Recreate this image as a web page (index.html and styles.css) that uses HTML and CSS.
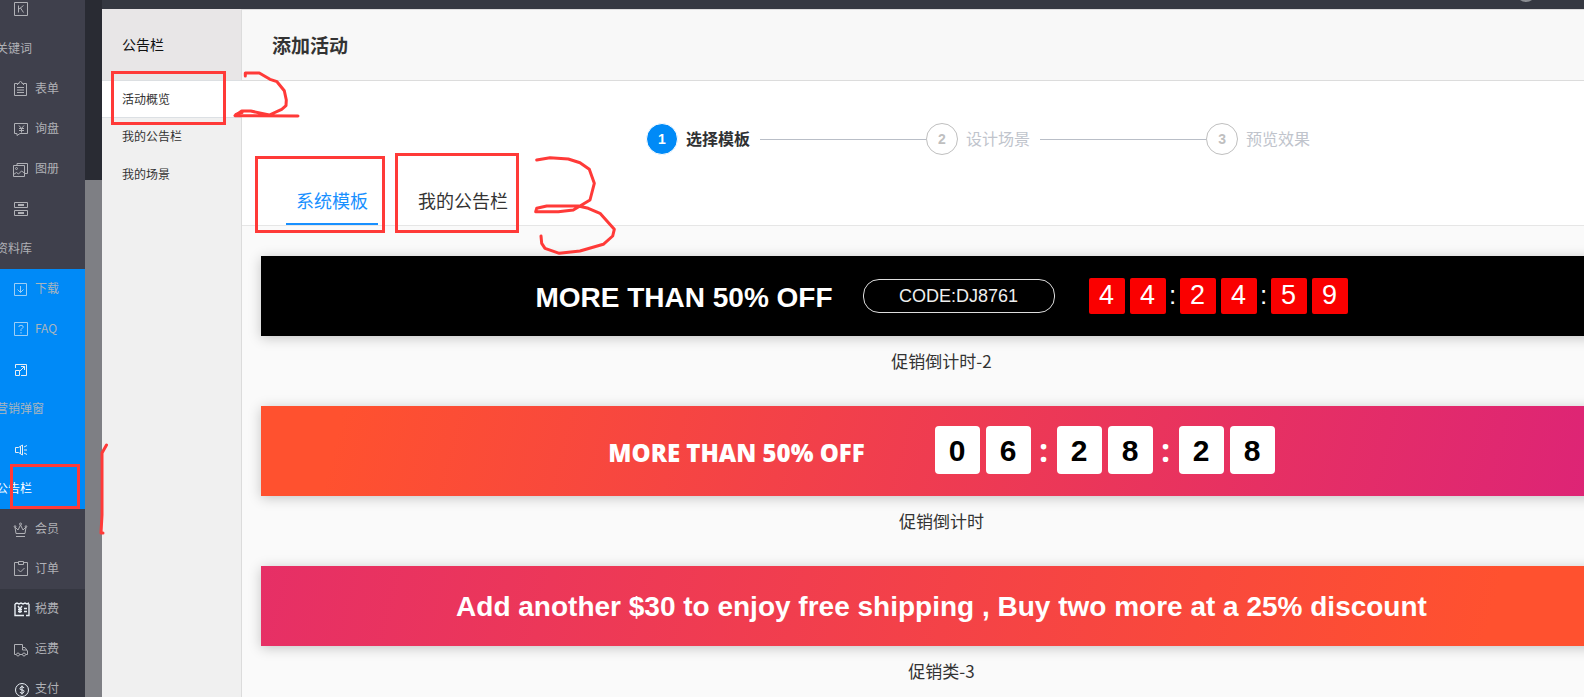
FILE: index.html
```html
<!DOCTYPE html>
<html lang="zh-CN">
<head>
<meta charset="utf-8">
<title>添加活动</title>
<link rel="stylesheet" href="styles.css">
</head>
<body>
<nav class="rail" aria-label="主导航">
  <div class="rail-group">
    <a class="rail-link wrap" href="#"><span class="rail-icon"><svg viewBox="0 0 16 16"><path d="M1.5 1.5h13v13h-13zM5.5 4.500v7M10.500 4.500l-4.500 3.500M7.500 7l3 4.500"/></svg></span><span class="rail-text">关键词</span></a>
    <a class="rail-link" href="#"><span class="rail-icon"><svg viewBox="0 0 16 16"><path d="M4 2.500H1.500v12h12v-12H11M4.500 4V2.500h1.500a1.500 2 0 0 1 3 0h1.500V4M4 6.500h7M4 9h7M4 11.500h7"/></svg></span><span class="rail-text">表单</span></a>
    <a class="rail-link" href="#"><span class="rail-icon"><svg viewBox="0 0 16 16"><path d="M1.500 2.500h13v10H7l-3 2v-2H1.500zM6 4.500l2.500 3 2.500-3M8.500 7.500v4M6 7.500h5M6 9.500h5"/></svg></span><span class="rail-text">询盘</span></a>
    <a class="rail-link" href="#"><span class="rail-icon"><svg viewBox="0 0 16 16"><path d="M.5 4.500h11v11H.5zM4 4V2.500h10.500v10H12M.5 13.500l3-2 2 1.500 3-3 3 2"/><circle cx="3.500" cy="7.500" r="1"/></svg></span><span class="rail-text">图册</span></a>
    <a class="rail-link wrap" href="#"><span class="rail-icon"><svg viewBox="0 0 16 16"><path d="M1.500 1.500h13v5h-13zM1.500 9.500h13v5h-13z"/><path class="thick" d="M5 4h6M5 12h6"/></svg></span><span class="rail-text">资料库</span></a>
  </div>
  <div class="rail-group active">
    <a class="rail-link" href="#"><span class="rail-icon"><svg viewBox="0 0 16 16"><path d="M1.500 2.500h12v12h-12zM7.500 5v6.500M4.500 8.500l3 3 3-3"/></svg></span><span class="rail-text">下载</span></a>
    <a class="rail-link" href="#"><span class="rail-icon"><svg viewBox="0 0 16 16"><path d="M1.500 1.500h13v13h-13zM6 6V5q2-1.500 4 0v1.500L8 8.500V10M8 11v1.500"/></svg></span><span class="rail-text">FAQ</span></a>
    <a class="rail-link wrap" href="#"><span class="rail-icon bright"><svg viewBox="0 0 16 16"><path d="M2.500 7V3.500h11v11H8M2.500 9.500h4v5h-4zM7 10l4.500-4.500M8 5.500h3.500V9"/></svg></span><span class="rail-text">营销弹窗</span></a>
    <a class="rail-link wrap current" href="#"><span class="rail-icon bright"><svg viewBox="0 0 16 16"><path d="M2.500 6.500h3l4-2.500v10l-4-2.500h-3zM7.500 5v8M11 6l3-1.500M11 9h3M11 12l3 1.500"/></svg></span><span class="rail-text">公告栏</span></a>
  </div>
  <div class="rail-group">
    <a class="rail-link" href="#"><span class="rail-icon"><svg viewBox="0 0 16 16"><path d="M3 12.500 2 6l3 3 2.500-5L10 9l3-3-1 6.500zM3 15.500h9"/><circle cx="7.500" cy="3" r="1"/><circle cx="2" cy="5.500" r=".8"/><circle cx="13" cy="5.500" r=".8"/></svg></span><span class="rail-text">会员</span></a>
    <a class="rail-link" href="#"><span class="rail-icon"><svg viewBox="0 0 16 16"><path d="M5 1.500H1.500v13h13V1.500H11M5.500.5h5v3h-5zM5 8.500l2.500 2.500 4-4"/></svg></span><span class="rail-text">订单</span></a>
  </div>
  <div class="rail-group deep">
    <a class="rail-link" href="#"><span class="rail-icon bright"><svg viewBox="0 0 18 16"><path class="bold" d="M2 3v11.500h9M13 14.500h3V3M2 3l2-1 2 1 2-1 2 1 2-1 2 1 2-1M5 5l2 3 2-3M7 8v4M5 8.500h4M5 10.500h4M11 7.500h3M11 10.500h3"/></svg></span><span class="rail-text">税费</span></a>
    <a class="rail-link" href="#"><span class="rail-icon"><svg viewBox="0 0 16 16"><path d="M3 13.500H1.500v-10h8v3h2.500l2.500 3.500v3.500H13M9.500 6.500v2.500h4.500M6.500 13.500h3"/><circle cx="5" cy="13.500" r="1.500"/><circle cx="11" cy="13.500" r="1.500"/></svg></span><span class="rail-text">运费</span></a>
    <a class="rail-link" href="#"><span class="rail-icon bright"><svg viewBox="0 0 16 16"><circle cx="9" cy="9" r="6.500"/><path d="M11 7q-.5-1.300-2-1.300T7 7.300 9 9t2 1.700-2 1.600-2-1.300M9 4.500v9"/></svg></span><span class="rail-text">支付</span></a>
  </div>
</nav>
<div class="rail-track"><div class="rail-thumb"></div></div>
<div class="app">
  <header class="topbar"><span class="avatar"></span></header>
  <div class="body">
    <aside class="side">
      <h2 class="side-title">公告栏</h2>
      <a class="side-link selected" href="#">活动概览</a>
      <a class="side-link" href="#">我的公告栏</a>
      <a class="side-link" href="#">我的场景</a>
    </aside>
    <main class="main">
      <h1 class="page-title">添加活动</h1>
      <section class="setup">
        <ol class="steps">
          <li class="step on"><span class="num">1</span><span class="step-name">选择模板</span></li>
          <li class="step"><span class="num">2</span><span class="step-name">设计场景</span></li>
          <li class="step"><span class="num">3</span><span class="step-name">预览效果</span></li>
        </ol>
        <div class="tabs" role="tablist">
          <button class="tab active" role="tab" aria-selected="true">系统模板</button>
          <button class="tab" role="tab" aria-selected="false">我的公告栏</button>
        </div>
      </section>
      <section class="templates">
        <figure class="card">
          <div class="banner black">
            <strong class="headline">MORE THAN 50% OFF</strong>
            <span class="code">CODE:DJ8761</span>
            <div class="timer red"><span class="pair"><b>4</b><b>4</b></span><i>:</i><span class="pair"><b>2</b><b>4</b></span><i>:</i><span class="pair"><b>5</b><b>9</b></span></div>
          </div>
          <figcaption>促销倒计时-2</figcaption>
        </figure>
        <figure class="card">
          <div class="banner sunset">
            <strong class="headline heavy">MORE THAN 50% OFF</strong>
            <div class="timer white"><span class="pair"><b>0</b><b>6</b></span><i>:</i><span class="pair"><b>2</b><b>8</b></span><i>:</i><span class="pair"><b>2</b><b>8</b></span></div>
          </div>
          <figcaption>促销倒计时</figcaption>
        </figure>
        <figure class="card">
          <div class="banner rose">
            <strong class="headline">Add another $30 to enjoy free shipping , Buy two more at a 25% discount</strong>
          </div>
          <figcaption>促销类-3</figcaption>
        </figure>
      </section>
    </main>
  </div>
</div>
<svg class="marks" width="1584" height="697" viewBox="0 0 1584 697" aria-hidden="true">
  <path class="box" d="M112.500 72.500h112v51h-112zM256.500 157.500h127v74h-127zM396.500 154.500h121v77h-121zM11.500 465.500h67v42h-67z"/>
  <path d="M245.300 76v-3h14L270 79.300l7 2.400 7.300 9 2 9.300-.3 5.700-4.300 3.600-12.400 5.700-18.600-4h-9L235 115.700l63 .3"/>
  <path d="M236 114.500l6-2M536.700 160 550 157.700l18.300 1.300 11.700 3.700 9.300 6.600 5 14L590 200l-16.700 10-15 1.700h-22.600l1-3.400 10-2.300h31.600l10 2.300 11.700 5 14.300 16-1.600 6.700-9.400 8.300L580 251l-20.700 2.300-14.300-5-3.300-5-.7-7.300"/>
  <path d="M106.500 445 102 453v62l-1 18h2"/>
</svg>
</body>
</html>
```
FILE: styles.css
```css
* { box-sizing: border-box; }

body {
  margin: 0;
  display: flex;
  height: 100vh;
  overflow: hidden;
  font-family: "Noto Sans CJK SC", sans-serif;
  color: #333;
  background: #fafafa;
}

a { color: inherit; text-decoration: none; }

/* Icon rail */
.rail {
  flex: none;
  width: 85px;
  margin-top: -11px;
  overflow: hidden;
  font-size: 12px;
  line-height: 40px;
  color: #b0b1b6;
  background: #3f404c;
}
.rail-group.active { background: #008af7; color: #a9b5be; }
.rail-group.active .rail-icon { color: #9dcef5; }
.rail-group .rail-icon.bright,
.rail-group.active .rail-icon.bright { color: #e8eef4; }
.rail-group.deep { background: #353741; }
.rail-link { display: flex; height: 40px; padding-left: 13px; gap: 6px; }
.rail-icon { flex: none; display: flex; align-items: center; width: 16px; height: 40px; }
.rail-icon svg { flex: none; height: 16px; fill: none; stroke: currentColor; stroke-width: 1; }
.rail-icon .thick { stroke-width: 2; }
.rail-icon .bold { stroke-width: 1.4; }
.rail-text { height: 40px; line-height: 38px; white-space: nowrap; }
.rail-link.wrap { flex-direction: column; gap: 0; height: 80px; }
.rail-link.wrap .rail-text { margin-left: -17px; }
.rail-link.current { color: #fff; }

.rail-track { flex: none; width: 17px; padding-top: 180px; background: #292b33; }
.rail-thumb { height: 100%; background: #7e7f84; }

/* Application frame */
.app { flex: 1; min-width: 0; display: flex; flex-direction: column; }
.topbar {
  flex: none;
  display: flex;
  justify-content: flex-end;
  height: 9px;
  padding-right: 48px;
  overflow: hidden;
  background: #353841;
}
.avatar { width: 20px; height: 20px; margin-top: -18px; border-radius: 50%; background: #8b8e92; }
.body { flex: 1; display: flex; min-height: 0; }

.side { flex: none; width: 140px; border-right: 1px solid #dcdcdc; background: #f0f0f0; }
.side-title {
  margin: 0;
  height: 72px;
  padding-left: 20px;
  border-bottom: 1px solid #dcdfe2;
  background: #e8e6e7;
  color: #111;
  font-size: 14px;
  font-weight: 400;
  line-height: 70px;
}
.side-link { display: block; height: 38px; padding-left: 20px; font-size: 12px; line-height: 36px; }
.side-link.selected { height: 37px; border-bottom: 1px solid #dce0e4; margin-right: -1px; background: #fff; }

.main { flex: 1; min-width: 0; overflow: hidden; }
.page-title {
  margin: 0;
  height: 72px;
  padding-left: 30px;
  border: solid #dcdcdc;
  border-width: 1px 0;
  background: #f8f8f8;
  font-size: 19px;
  font-weight: 700;
  line-height: 70px;
}

.setup { border-bottom: 1px solid #e6e6e6; background: #fff; }

/* Step indicator */
.steps { display: flex; margin: 0; padding: 42px 0 0 404px; list-style: none; }
.step { display: flex; align-items: center; height: 32px; gap: 8px; font-size: 16px; color: #c0c4cc; }
.step:not(:last-child)::after { content: ""; width: 166px; height: 1px; margin-left: 2px; background: #b9bec7; }
.num {
  width: 32px;
  height: 32px;
  border: 1px solid #bfbfbf;
  border-radius: 50%;
  color: #bfbfbf;
  font: 700 14px/30px "Liberation Sans", sans-serif;
  text-align: center;
}
.step-name { height: 32px; line-height: 30px; white-space: nowrap; }
.step.on { color: #303133; font-weight: 700; }
.step.on .num { border-color: #fff; background: #008af7; color: #fff; }

/* Tabs */
.tabs { display: flex; gap: 30px; padding: 20px 0 0 44px; }
.tab {
  height: 50px;
  padding: 2px 10px 0;
  border: 0;
  border-bottom: 2px solid transparent;
  background: none;
  color: #333;
  font: 400 18px/24px "Noto Sans CJK SC", sans-serif;
}
.tab.active { border-color: #1890ff; color: #1890ff; }

/* Template previews; the list runs past the window's right edge */
.templates { display: flex; flex-direction: column; gap: 20px; padding-top: 30px; margin: 0 -38px 0 19px; }
.card { margin: 0; }
.card figcaption { height: 50px; font-size: 17px; line-height: 50px; text-align: center; }
.banner {
  display: flex;
  align-items: center;
  justify-content: center;
  height: 80px;
  box-shadow: 0 2px 12px rgba(0, 0, 0, .22);
  color: #fff;
  font-family: "Liberation Sans", Arial, sans-serif;
}
.black { background: #000; }
.sunset { height: 90px; gap: 70px; background: linear-gradient(105deg, #ff512f 6%, #dd2476 98%); }
.rose { background: linear-gradient(105deg, #e62f66, #ff512f 90%); }
.headline { padding-top: 2px; font-size: 28px; line-height: 36px; white-space: nowrap; }
.headline.heavy { padding-top: 4px; font: 800 24px/36px "Open Sans", sans-serif; }
.black .headline { padding-top: 4px; }
.code {
  width: 192px;
  margin: 0 34px 0 30px;
  border: 1px solid #ddd;
  border-radius: 16px;
  color: #eee;
  font-size: 18px;
  line-height: 32px;
  text-align: center;
}
.timer, .pair { display: flex; text-align: center; }
.timer b { border-radius: 2px; }
.timer i { font-style: normal; }
.red .pair { gap: 5px; }
.red b { width: 36px; height: 36px; background: #fa0000; font: 400 27px/35px "Liberation Sans", sans-serif; }
.red i { width: 14px; font-size: 26px; line-height: 34px; }
.white { padding-bottom: 2px; }
.white .pair { gap: 6px; }
.white b { width: 45px; height: 48px; border-radius: 4px; background: #fff; color: #000; font: 700 30px/50px "Liberation Sans", sans-serif; }
.white i { width: 26px; font: 700 32px/48px "Open Sans", sans-serif; }

/* Hand-drawn annotations */
.marks { position: absolute; top: 0; left: 0; pointer-events: none; fill: none; stroke: #ff3a38; stroke-width: 3; stroke-linecap: round; stroke-linejoin: round; }
.marks .box { stroke-linejoin: miter; }
```
